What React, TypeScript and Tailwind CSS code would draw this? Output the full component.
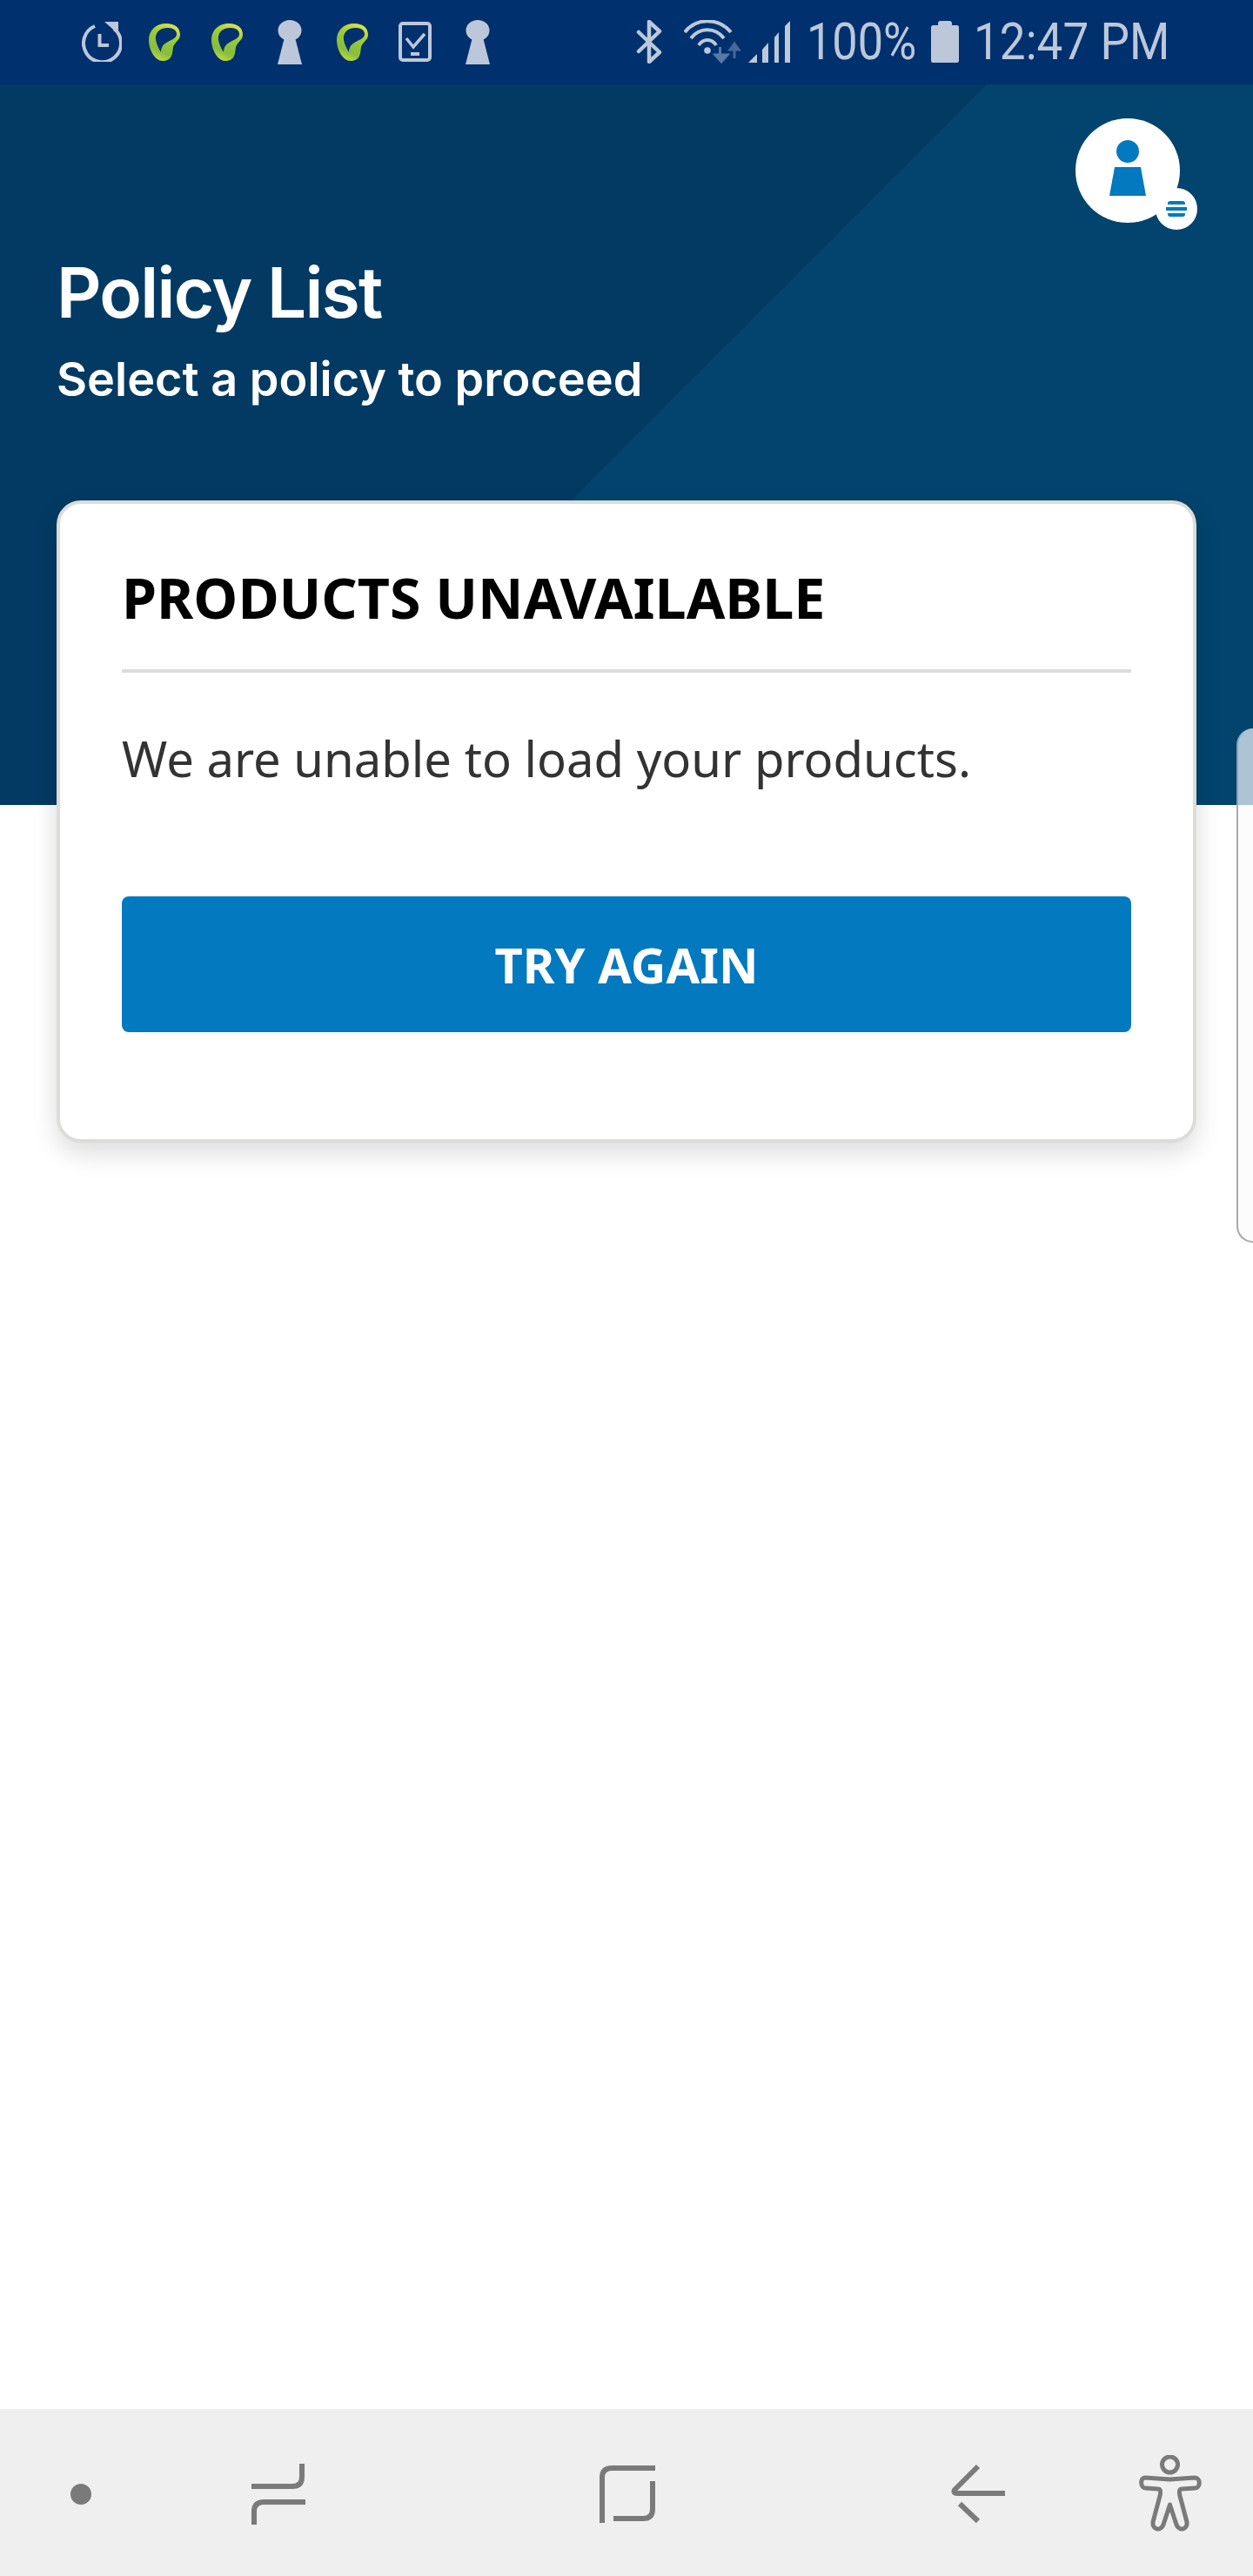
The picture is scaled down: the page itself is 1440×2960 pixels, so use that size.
import React from "react";

const SB = "#bcc8da";

function Timer() {
  return (
    <svg width="46" height="46" viewBox="0 0 46 46" fill="none" stroke={SB} className="shrink-0">
      <path d="M15 5 A21.5 21.5 0 1 0 37 8" strokeWidth="4" />
      <path d="M26 0 H42 V14 Z" fill={SB} strokeWidth="0" />
      <path d="M20.5 14 V27 H31" strokeWidth="4" />
    </svg>
  );
}

function Leaf({ id }: { id: string }) {
  return (
    <svg width="36" height="43" viewBox="0 0 36 43" className="shrink-0">
      <defs>
        <linearGradient id={id} x1="0.7" y1="0" x2="0.3" y2="1">
          <stop offset="0" stopColor="#dbe24b" />
          <stop offset="0.35" stopColor="#9ccb3c" />
          <stop offset="0.75" stopColor="#86bd3c" />
          <stop offset="1" stopColor="#c4dc40" />
        </linearGradient>
      </defs>
      <path
        fillRule="evenodd"
        fill={`url(#${id})`}
        d="M20 0C30 0 36 5 36 13C36 19 30 21 28 27C27 33 28 43 16 43C7 43 0 30 0 19C0 7 9 0 20 0ZM22 5C12 5 7 11 8 19C9 24 11 28 14 33C14 28 16 24 22 21C27 18 32 17 32 12C32 8 28 5 22 5Z"
      />
    </svg>
  );
}

function Keyhole() {
  return (
    <svg width="28" height="51" viewBox="0 0 28 51" fill={SB} className="shrink-0">
      <ellipse cx="14" cy="12" rx="13.5" ry="12" />
      <path d="M8 20 H20 L28 51 H0 Z" />
    </svg>
  );
}

function PhoneCheck() {
  return (
    <svg width="38" height="46" viewBox="0 0 38 46" fill="none" stroke={SB} className="shrink-0">
      <rect x="2" y="2" width="34" height="42" rx="3" strokeWidth="4" />
      <path d="M9 19 L17 29 L30 14" strokeWidth="3.5" />
      <path d="M14 37 H24" strokeWidth="4" />
    </svg>
  );
}

function Bluetooth() {
  return (
    <svg width="30" height="50" viewBox="0 0 30 50" fill="none" stroke={SB} strokeWidth="4.5" strokeLinecap="round" strokeLinejoin="round" className="shrink-0">
      <path d="M3 14 L27 37 L15 48 V2 L27 13 L3 36" />
    </svg>
  );
}

function Wifi() {
  return (
    <svg width="66" height="50" viewBox="0 0 66 50" fill="none" className="shrink-0">
      <g stroke={SB} strokeWidth="4" fill="none">
        <path d="M1 14 C14 -3 40 -3 54 14" />
        <path d="M8 21 C18 8 36 8 46 21" />
        <path d="M17 29 C22 21 32 21 37 29" />
      </g>
      <circle cx="27" cy="35" r="3.8" fill={SB} />
      <path d="M41.5 31 V41 M36 40 L43 48 L50 40Z" stroke="#5878a8" strokeWidth="3" fill="#5878a8" />
      <path d="M58 34 V44 M53 34 L58 27 L63 34Z" stroke="#45689c" strokeWidth="3" fill="#45689c" />
    </svg>
  );
}

function Signal() {
  return (
    <svg width="48" height="48" viewBox="0 0 48 48" fill={SB} className="shrink-0">
      <path d="M0 48 L10 38 V48Z" />
      <path d="M16 48 V33 L23 25 V48Z" />
      <path d="M30 48 V19 L35 13 V48Z" />
      <path d="M42 48 V6 L48 0 V48Z" />
    </svg>
  );
}

function Battery() {
  return (
    <svg width="32" height="48" viewBox="0 0 32 48" fill={SB} className="shrink-0">
      <rect x="8" y="0" width="16" height="8" rx="3" />
      <rect x="0" y="5" width="32" height="43" rx="2.5" />
    </svg>
  );
}

function StatusBar() {
  return (
    <div className="h-[97px] shrink-0 bg-[#00306e] flex items-center pl-[94px] pb-[1px]">
      <Timer />
      <div className="ml-[31px]"><Leaf id="l1" /></div>
      <div className="ml-[36px]"><Leaf id="l2" /></div>
      <div className="ml-[40px]"><Keyhole /></div>
      <div className="ml-[40px]"><Leaf id="l3" /></div>
      <div className="ml-[35px]"><PhoneCheck /></div>
      <div className="ml-[39px]"><Keyhole /></div>
      <div className="ml-[168px]"><Bluetooth /></div>
      <div className="ml-[25px]"><Wifi /></div>
      <div className="ml-[8px]"><Signal /></div>
      <div className="ml-[19px] w-[126px] h-[60px] flex items-center">
        <span className="origin-left scale-x-[0.87] whitespace-nowrap font-['Roboto',sans-serif] font-normal text-[60px] leading-[60px] text-[#bcc8da]">100%</span>
      </div>
      <div className="ml-[17px]"><Battery /></div>
      <div className="ml-[17px] w-[222px] h-[60px] flex items-center">
        <span className="origin-left scale-x-[0.885] whitespace-nowrap font-['Roboto',sans-serif] font-normal text-[60px] leading-[60px] text-[#bcc8da]">12:47 PM</span>
      </div>
    </div>
  );
}

function Avatar() {
  return (
    <div className="relative w-[120px] h-[120px] rounded-full bg-white">
      <svg width="42" height="64" viewBox="0 0 42 64" fill="#0379bf" className="absolute left-[39px] top-[25px]">
        <circle cx="21" cy="13" r="13" />
        <path d="M6 31 H36 L42 64 H0 Z" />
      </svg>
      <div className="absolute left-[92px] top-[80px] w-[48px] h-[48px] rounded-full bg-white flex flex-col items-center justify-center gap-[3px]">
        <div className="w-[20px] h-[4px] rounded-t-[3px] bg-[#0379bf]" />
        <div className="w-[24px] h-[4px] bg-[#0379bf]" />
        <div className="w-[20px] h-[4px] rounded-b-[3px] bg-[#0379bf]" />
      </div>
    </div>
  );
}

function Header() {
  return (
    <div className="relative h-[828px] shrink-0 bg-[linear-gradient(135deg,#033a63_802px,#02446e_802px)]">
      <div className="flex justify-end pt-[39px] pr-[84px]">
        <Avatar />
      </div>
      <h1 className="mt-[32px] ml-[65px] font-['Inter',sans-serif] font-semibold text-[80px] leading-[96px] text-white tracking-[-1.7px]">Policy List</h1>
      <p className="mt-[19px] ml-[65px] font-['Inter',sans-serif] font-semibold text-[54px] leading-[66px] text-white">Select a policy to proceed</p>
      <div className="absolute right-0 top-[740px] w-[19px] h-[88px] rounded-tl-[20px] border-l-2 border-t-0 border-[#8ea4b6] bg-[#aec3d3]" />
    </div>
  );
}

function Card() {
  return (
    <div className="relative z-10 -mt-[350px] ml-[65px] w-[1310px] h-[738px] rounded-[28px] border-4 border-[#dcdcd8] bg-white shadow-[0_12px_30px_rgba(0,0,0,0.14)] px-[71px] pt-[63px]">
      <h2 className="font-['Noto_Sans',sans-serif] font-bold text-[64.5px] leading-[88px] text-black whitespace-nowrap">PRODUCTS UNAVAILABLE</h2>
      <div className="mt-[39px] h-[4px] bg-[#dcdcd8]" />
      <p className="mt-[58px] font-['Noto_Sans',sans-serif] text-[56.2px] leading-[80px] text-[#333333] whitespace-nowrap">We are unable to load your products.</p>
      <button className="mt-[119px] w-full h-[156px] rounded-[8px] bg-[#0379bf] font-['Noto_Sans',sans-serif] font-bold text-[56px] leading-[76px] text-white">TRY AGAIN</button>
    </div>
  );
}

function NavBar() {
  return (
    <div className="h-[192px] shrink-0 bg-[#efefef] flex items-center pl-[81px] pt-[4px]">
      <div className="w-[24px] h-[24px] rounded-full bg-[#7a7a7a] shrink-0" />
      <svg width="62" height="72" viewBox="0 0 62 72" fill="none" stroke="#7a7a7a" strokeWidth="6" className="ml-[184px] shrink-0">
        <path d="M58 1 V16 Q58 27 47 27 H0" />
        <path d="M62 45 H14 Q3 45 3 56 V71" />
      </svg>
      <svg width="64" height="68" viewBox="0 0 64 68" fill="none" stroke="#7a7a7a" strokeWidth="6" className="ml-[338px] shrink-0">
        <path d="M64 4 H14 Q3 4 3 15 V67" />
        <path d="M61 19 V51 Q61 62 50 62 H16" />
      </svg>
      <svg width="64" height="70" viewBox="0 0 64 70" fill="none" stroke="#7a7a7a" strokeWidth="6" strokeLinejoin="round" className="ml-[340px] shrink-0">
        <path d="M31 3 L4 30 Q2 34 7 34 H62" />
        <path d="M10 46 L31 66" />
      </svg>
      <svg width="76" height="90" viewBox="0 0 76 90" fill="none" stroke="#7a7a7a" strokeWidth="5" strokeLinejoin="round" className="ml-[150px] shrink-0">
        <circle cx="37.5" cy="11" r="9" />
        <path d="M9 26 C3 26 3 38 10 38 L24 39 C27 39 27 43 26 47 L18 77 C17 86 27 88 30 80 L37.5 57 L45 80 C48 88 58 86 57 77 L49 47 C48 43 48 39 51 39 L66 38 C73 38 73 26 66 26 L37.5 28 Z" />
      </svg>
    </div>
  );
}

export default function App() {
  return (
    <div className="relative w-[1440px] h-[2960px] overflow-hidden bg-white flex flex-col">
      <StatusBar />
      <Header />
      <div className="flex-1">
        <Card />
        <div className="absolute right-0 top-[925px] w-[19px] h-[503px] rounded-bl-[20px] border-l-2 border-b-2 border-[#aaaaaa] bg-[#fcfcfc]" />
      </div>
      <NavBar />
    </div>
  );
}
